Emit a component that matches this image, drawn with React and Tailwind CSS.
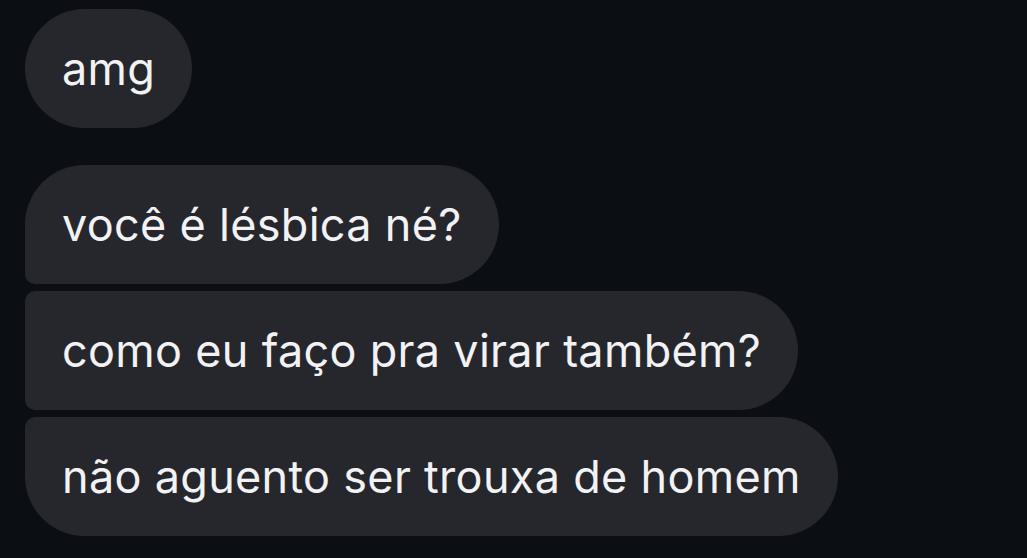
export default function App() {
  const messages = [
    { text: "amg", shape: "rounded-[60px]", mt: "mt-[9px]" },
    { text: "você é lésbica né?", shape: "rounded-[60px] rounded-bl-[10px]", mt: "mt-[37px]" },
    { text: "como eu faço pra virar também?", shape: "rounded-r-[60px] rounded-l-[10px]", mt: "mt-[7px]" },
    { text: "não aguento ser trouxa de homem", shape: "rounded-[60px] rounded-tl-[10px]", mt: "mt-[7px]" },
  ];

  return (
    <div className="w-[1027px] h-[558px] bg-[#0b0e12] overflow-hidden flex flex-col items-start pl-[25px]">
      {messages.map((m) => (
        <div
          key={m.text}
          className={`${m.mt} ${m.shape} h-[119px] bg-[#25272c] flex items-center px-[37px] text-[#f2f2f4] text-[45px] whitespace-nowrap font-['Inter','Noto_Sans',sans-serif] tracking-[0.3px]`}
        >
          {m.text}
        </div>
      ))}
    </div>
  );
}
